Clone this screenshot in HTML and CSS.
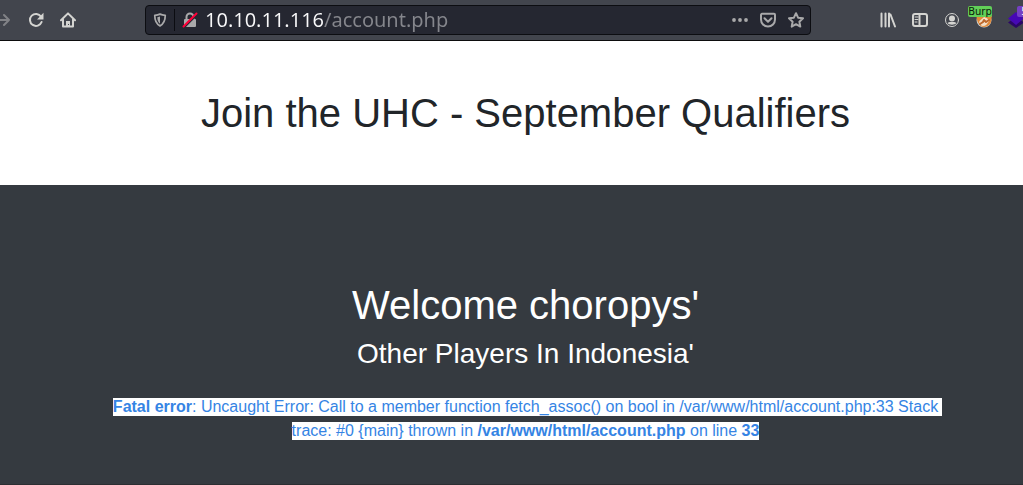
FILE: index.html
```html
<!DOCTYPE html>
<html lang="en">
<head>
<meta charset="utf-8">
<title>Join the UHC - September Qualifiers</title>
<link rel="stylesheet" href="styles.css">
</head>
<body>
<header class="toolbar">
  <nav class="nav-buttons" aria-label="Navigation">
    <button class="tool dim" aria-label="Forward"><svg viewBox="0 0 16 16"><path d="M0 8h13M8 3l5 5-5 5"/></svg></button>
    <button class="tool" aria-label="Reload"><svg viewBox="0 0 16 16"><path d="M13 4.6A6 6 0 1 0 13.6 10"/><path class="solid" d="M15.5.8v6.6H9z"/></svg></button>
    <button class="tool" aria-label="Home"><svg viewBox="0 0 16 16"><path d="M1 8.3 8 1.4l7 6.9M3 7.5v7h10v-7"/><path class="solid" d="M6 9h4v6H6z"/><path class="hole" d="M8 12h1v1H8z"/></svg></button>
  </nav>
  <div class="urlbar">
    <button class="tool small" aria-label="Tracking protection"><svg viewBox="0 0 16 16"><path d="M8 1.3c2 .9 4 1.2 6 1.3 0 6-1.5 9.8-6 12.1-4.500-2.300-6-6.100-6-12.100 2-.1 4-.4 6-1.300z"/><path class="solid" d="M8 4v8.200c-2.200-1.500-3-4-3.100-7.400z"/></svg></button>
    <span class="divider"></span>
    <button class="tool lock" aria-label="Connection not secure"><svg viewBox="0 0 16 16"><path d="M4.500 8V5a3.500 3.500 0 0 1 7 0v3"/><rect class="solid" x="2" y="7" width="12" height="8" rx="1"/><path class="strike-gap" d="M2 15.500 15 2.500"/><path class="strike" d="M1.500 14.500 14.500 1.500"/></svg></button>
    <input class="address" type="text" aria-label="Address" value="10.10.11.116/account.php" spellcheck="false">
    <div class="page-actions">
      <button class="tool" aria-label="Page actions"><svg viewBox="0 0 16 16"><circle class="solid" cx="2" cy="8" r="1.900"/><circle class="solid" cx="8" cy="8" r="1.900"/><circle class="solid" cx="14" cy="8" r="1.900"/></svg></button>
      <button class="tool" aria-label="Save to Pocket"><svg viewBox="0 0 16 16"><path d="M2 1.800h12a1 1 0 0 1 1 1v4.700a7 7 0 0 1-14 0V2.800a1 1 0 0 1 1-1zM4.500 6.300 8 9.700l3.500-3.400"/></svg></button>
      <button class="tool" aria-label="Bookmark"><svg viewBox="0 0 16 16"><path d="m8 1.200 2.100 4.500 4.900.6-3.600 3.400.9 4.900L8 12.200l-4.300 2.400.9-4.900L1 6.300l4.900-.6z"/></svg></button>
    </div>
  </div>
  <div class="extensions">
    <button class="tool" aria-label="Library"><svg viewBox="0 0 16 16"><path d="M1.500 1.500v13M5.500 1.500v13M9 1.500v13M10.500 2.500l4.500 12"/></svg></button>
    <button class="tool" aria-label="Sidebars"><svg viewBox="0 0 16 16"><rect x="1" y="2" width="14" height="12" rx="2"/><path d="M7.500 2v12"/><path class="thin" d="M3 5h3M3 7.500h3M3 10h2"/></svg></button>
    <button class="tool" aria-label="Account"><svg viewBox="0 0 16 16"><circle class="ring" cx="8" cy="8" r="6.500"/><circle class="solid" cx="8" cy="6.500" r="3"/><path class="solid" d="M3.600 11c1-1 1.800-1 2.800-1h3.200c1 0 1.800 0 2.800 1-1.200 2.300-7.600 2.300-8.800 0z"/></svg></button>
    <button class="tool ext" aria-label="FoxyProxy"><svg viewBox="0 0 16 16"><circle cx="8" cy="8" r="7.500" fill="#c8cfd0" stroke="none"/><path d="M0 3c3 0 4 1 8 1s6-2 8 0c-1 3 0 5-2 8-3 4-9 4-11 0C1 10 1 6 0 3z" fill="#e48a38" stroke="none"/><path d="M3 10c2-3 3-3 5-5 2 1 4 1 5 4-2 3-3 5-6 5-2 0-3-2-4-4z" fill="#f4dfc7" stroke="none"/><path d="m4 12 3-2 1-2 2 2 3-2" fill="none" stroke="#bf682b"/></svg><span class="badge burp">Burp</span></button>
    <button class="tool ext" aria-label="Wappalyzer"><svg viewBox="0 0 16 16"><path d="M0 10.500 8 5l8 5.500-8 5.500z" fill="#2b0767" stroke="none"/><path d="M0 6.500 8 0l8 6.500L8 13z" fill="#4608b5" stroke="none"/></svg><span class="badge count">5</span></button>
  </div>
</header>
<main>
  <section class="intro"><h1>Join the UHC - September Qualifiers</h1></section>
  <section class="account">
    <h1>Welcome choropys'</h1>
    <h2>Other Players In Indonesia'</h2>
    <p><span class="selected first"><b>Fatal error</b>: Uncaught Error: Call to a member function fetch_assoc() on bool in /var/www/html/account.php:33 Stack</span><br><span class="selected">trace: #0 {main} thrown in <b>/var/www/html/account.php</b> on line <b>33</b></span></p>
  </section>
</main>
</body>
</html>
```

FILE: styles.css
```css
* { box-sizing: border-box; }
html, body { height: 100%; }
body {
  margin: 0;
  display: flex;
  flex-direction: column;
  overflow: hidden;
  background: #fff;
  color: #212529;
  font: 16px/24px "Liberation Sans", Arial, sans-serif;
}
.toolbar {
  display: flex;
  align-items: center;
  flex: none;
  height: 41px;
  background: #42454d;
  border-bottom: 1px solid #0c0c0d;
}
.tool {
  position: relative;
  display: block;
  flex: none;
  width: 16px;
  height: 16px;
  padding: 0;
  border: 0;
  background: none;
  color: #d4d4d1;
}
.tool svg {
  display: block;
  width: 100%;
  height: 100%;
  fill: none;
  stroke: currentColor;
  stroke-width: 2;
  stroke-linejoin: round;
  stroke-linecap: round;
}
.tool .solid { fill: currentColor; stroke: none; }
.tool .hole { fill: #42454d; stroke: none; }
.tool .thin { stroke-width: 1; }
.tool .ring { stroke-width: 1; }
.tool .strike { stroke: #ff0039; }
.tool .strike-gap { stroke: #252731; }
.dim { color: #818286; }
.nav-buttons {
  display: flex;
  gap: 16px;
  flex: none;
  width: 145px;
  margin-left: -4px;
  margin-right: 4px;
}
.urlbar {
  display: flex;
  align-items: center;
  flex: 1;
  min-width: 0;
  height: 30px;
  padding: 0 6px 0 7px;
  background: #252731;
  border: 1px solid #0c0d11;
  border-radius: 4px;
}
.urlbar .tool { color: #a9a9aa; }
.urlbar .small { width: 14px; height: 14px; }
.divider { width: 1px; height: 22px; margin: 0 7px; background: #0b0c11; }
.address {
  flex: 1;
  min-width: 0;
  height: 28px;
  margin-left: 7px;
  padding: 0;
  border: 0;
  outline: 0;
  background: linear-gradient(90deg, #f9f9fa 119px, #85868c 119px);
  background-clip: text;
  -webkit-background-clip: text;
  color: transparent;
  font: 20px/28px "Noto Sans", "Open Sans", sans-serif;
}
.page-actions { display: flex; gap: 12px; }
.extensions { display: flex; gap: 16px; flex: none; margin-left: 69px; margin-right: -1px; }
.badge {
  position: absolute;
  top: -6px;
  border-radius: 2px;
  font: 10px/11px "DejaVu Sans", sans-serif;
  text-align: center;
}
.burp { left: -8px; width: 24px; background: #62cf58; color: #0b180b; }
.count { left: 9px; width: 15px; background: #7540c4; color: #fff; }
main { display: flex; flex-direction: column; flex: 1; }
h1, h2 { margin: 0 0 8px; font-weight: 400; }
h1 { font-size: 40px; line-height: 48px; }
h2 { font-size: 28px; line-height: 34px; }
.intro, .account { padding-left: 28px; text-align: center; }
.intro { padding-top: 48px; padding-bottom: 48px; }
.intro h1 { margin: 0; }
.account {
  flex: 1;
  padding-top: 96px;
  background: #353a40;
  border-bottom: 1px solid #2c2e32;
  color: #fff;
}
.account p { margin: 24px 0 0; }
.selected { padding-bottom: 1px; background: #fff; color: #3584e4; }
.first { box-shadow: 4px 0 #fff; }
```
